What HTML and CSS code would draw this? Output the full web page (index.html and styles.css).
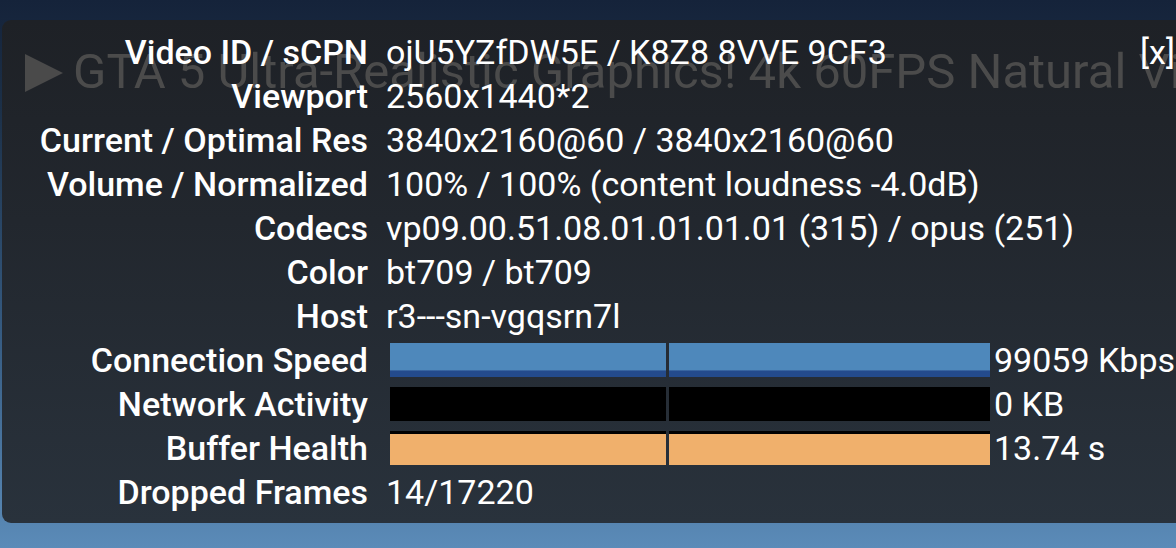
FILE: index.html
```html
<!DOCTYPE html>
<html>
<head>
<meta charset="utf-8">
<link rel="stylesheet" href="styles.css">
</head>
<body>
<div class="panel">
  <div class="bgtitle">
    <svg class="play" width="38" height="38" viewBox="0 0 38 38"><polygon points="0,0 38,19 0,38" fill="#4a4a4a"/></svg>
    <span class="bgtext">GTA 5 Ultra-Realistic Graphics! 4k 60FPS Natural Vision Evolved</span>
  </div>
  <div class="close">[x]</div>
  <div class="rows">
    <div class="row"><div class="label">Video ID / sCPN</div><div class="value">ojU5YZfDW5E / K8Z8 8VVE 9CF3</div></div>
    <div class="row"><div class="label">Viewport</div><div class="value">2560x1440*2</div></div>
    <div class="row"><div class="label">Current / Optimal Res</div><div class="value">3840x2160@60 / 3840x2160@60</div></div>
    <div class="row"><div class="label">Volume / Normalized</div><div class="value">100% / 100% (content loudness -4.0dB)</div></div>
    <div class="row"><div class="label">Codecs</div><div class="value">vp09.00.51.08.01.01.01.01 (315) / opus (251)</div></div>
    <div class="row"><div class="label">Color</div><div class="value">bt709 / bt709</div></div>
    <div class="row"><div class="label">Host</div><div class="value">r3---sn-vgqsrn7l</div></div>
    <div class="row"><div class="label">Connection Speed</div>
      <div class="bar bar-speed"><div class="seg seg-a"></div><div class="seg seg-b"></div></div>
      <div class="barval">99059 Kbps</div></div>
    <div class="row"><div class="label">Network Activity</div>
      <div class="bar bar-net"><div class="seg seg-a"></div><div class="seg seg-b"></div></div>
      <div class="barval">0 KB</div></div>
    <div class="row"><div class="label">Buffer Health</div>
      <div class="bar bar-buf"><div class="seg seg-a"></div><div class="seg seg-b"></div></div>
      <div class="barval">13.74 s</div></div>
    <div class="row"><div class="label">Dropped Frames</div><div class="value">14/17220</div></div>
  </div>
</div>
</body>
</html>
```

FILE: styles.css
```css
html, body {
  margin: 0;
  padding: 0;
  width: 1176px;
  height: 548px;
  overflow: hidden;
}
body {
  background: linear-gradient(180deg, #15233a 0%, #1c3048 20%, #355a80 60%, #5b8bb8 100%);
  font-family: Roboto, "Liberation Sans", sans-serif;
  color: #ffffff;
  padding-top: 20px;
  box-sizing: border-box;
}
.panel {
  position: relative;
  margin-left: 2px;
  width: 1200px;
  height: 503px;
  box-sizing: border-box;
  padding: 10px 0 8px 0;
  border-radius: 9px;
  background: linear-gradient(180deg, #1e2126 0%, #22272e 40%, #29323c 100%);
  overflow: hidden;
}
.bgtitle {
  position: absolute;
  left: 23px;
  top: 22px;
  display: flex;
  align-items: center;
  white-space: nowrap;
  font-size: 49px;
  line-height: 60px;
  color: #4b4b4b;
}
.play {
  display: block;
  margin-right: 10px;
  margin-top: 2px;
}
.close {
  position: absolute;
  top: 10px;
  left: 1138px;
  font-size: 34px;
  line-height: 44px;
}
.rows {
  position: relative;
  display: flex;
  flex-direction: column;
}
.row {
  display: flex;
  align-items: center;
  height: 44px;
  font-size: 34px;
  line-height: 44px;
  white-space: nowrap;
}
.label {
  width: 366px;
  flex: none;
  text-align: right;
  font-weight: 500;
}
.value {
  margin-left: 18px;
}
.bar {
  margin-left: 22px;
  display: flex;
  gap: 3px;
  height: 34px;
  width: 600px;
  flex: none;
}
.seg-a { width: 276px; }
.seg-b { flex: 1; }
.bar-speed .seg {
  background: linear-gradient(180deg, #4e88bb 0%, #4e88bb 78%, #5a8fc0 79%, #244b8c 82%, #244b8c 100%);
}
.bar-net .seg {
  background: #000000;
}
.bar-buf .seg {
  background: linear-gradient(180deg, #000000 0, #000000 3px, #f0b06c 3px, #f0b06c 100%);
}
.barval {
  margin-left: 4px;
}
```
